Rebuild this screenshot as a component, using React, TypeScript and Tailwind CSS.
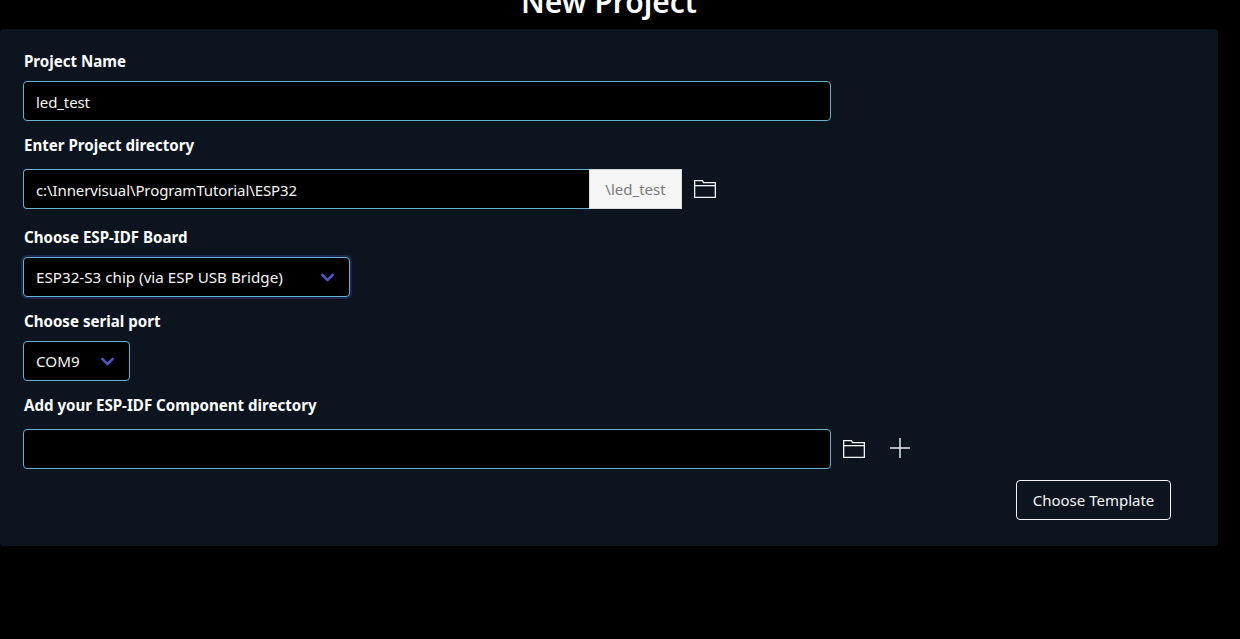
import { ChevronDown } from 'lucide-react';
import type { ReactNode } from 'react';

function FolderIcon() {
  return (
    <svg width="24" height="20" viewBox="0 0 24 20" fill="none" stroke="#f5f5f5" strokeWidth="1.3" className="block">
      <path d="M1.65 1.65 H9.5 L10.5 3.65 H22.35 V18.35 H1.65 Z" />
      <path d="M1.65 6.65 H22.35" />
    </svg>
  );
}

function PlusIcon() {
  return (
    <svg width="20" height="20" viewBox="0 0 20 20" stroke="#e8e8e8" strokeWidth="1.5" className="block">
      <path d="M10 0 V20 M0 10 H20" />
    </svg>
  );
}

function Field({ label, children }: { label: string; children: ReactNode }) {
  return (
    <div className="mb-3">
      <label className="block mb-2 h-6 pl-px text-[15.1px] leading-6 font-bold text-white">{label}</label>
      {children}
    </div>
  );
}

function TextInput({ value, className }: { value: string; className: string }) {
  return (
    <input
      readOnly
      value={value}
      className={`h-10 bg-black border border-[#66b2d2] px-3 pt-0.5 text-[15px] tracking-[-0.1px] text-[#f5f5f5] outline-none ${className}`}
    />
  );
}

function SelectBox({ value, className }: { value: string; className: string }) {
  return (
    <div className={`h-10 flex items-center justify-between bg-black border border-[#66b2d2] rounded pl-3 text-[15.2px] text-[#f5f5f5] ${className}`}>
      <span className="pt-px">{value}</span>
      <ChevronDown className="w-[21px] h-[21px] text-[#4c58c0]" strokeWidth={3} />
    </div>
  );
}

export default function App() {
  return (
    <div className="min-h-[639px] bg-black overflow-hidden font-['Noto_Sans',sans-serif]">
      <h1 className="w-[1218px] -mt-[19px] h-[48px] text-center text-[30px] leading-[41px] font-semibold text-white">New Project</h1>
      <div className="w-[1218px] h-[517px] bg-[#0c1420] rounded pt-5 pl-[23px] pr-[47px]">
        <Field label="Project Name">
          <TextInput value="led_test" className="w-[808px] rounded block" />
        </Field>
        <Field label="Enter Project directory">
          <div className="flex items-center py-1">
            <TextInput value="c:\Innervisual\ProgramTutorial\ESP32" className="w-[566px] rounded-l border-r-0" />
            <div className="w-[93px] h-10 flex items-center justify-center bg-[#f5f5f5] border border-[#dbdbdb] text-[15px] text-[#7a7a7a]">\led_test</div>
            <div className="ml-[11px]"><FolderIcon /></div>
          </div>
        </Field>
        <Field label="Choose ESP-IDF Board">
          <SelectBox value="ESP32-S3 chip (via ESP USB Bridge)" className="w-[327px] pr-[11px] shadow-[0_0_0_2px_rgba(72,95,199,0.25)]" />
        </Field>
        <Field label="Choose serial port">
          <SelectBox value="COM9" className="w-[107px] pr-[11px]" />
        </Field>
        <Field label="Add your ESP-IDF Component directory">
          <div className="flex items-center pt-1">
            <TextInput value="" className="w-[808px] rounded" />
            <div className="ml-[11px]"><FolderIcon /></div>
            <div className="ml-6 -mt-0.5"><PlusIcon /></div>
          </div>
        </Field>
        <div className="flex justify-end -mt-px">
          <button className="w-[155px] h-10 border border-[#f5f5f5] rounded text-[15px] text-[#f5f5f5]">Choose Template</button>
        </div>
      </div>
    </div>
  );
}
